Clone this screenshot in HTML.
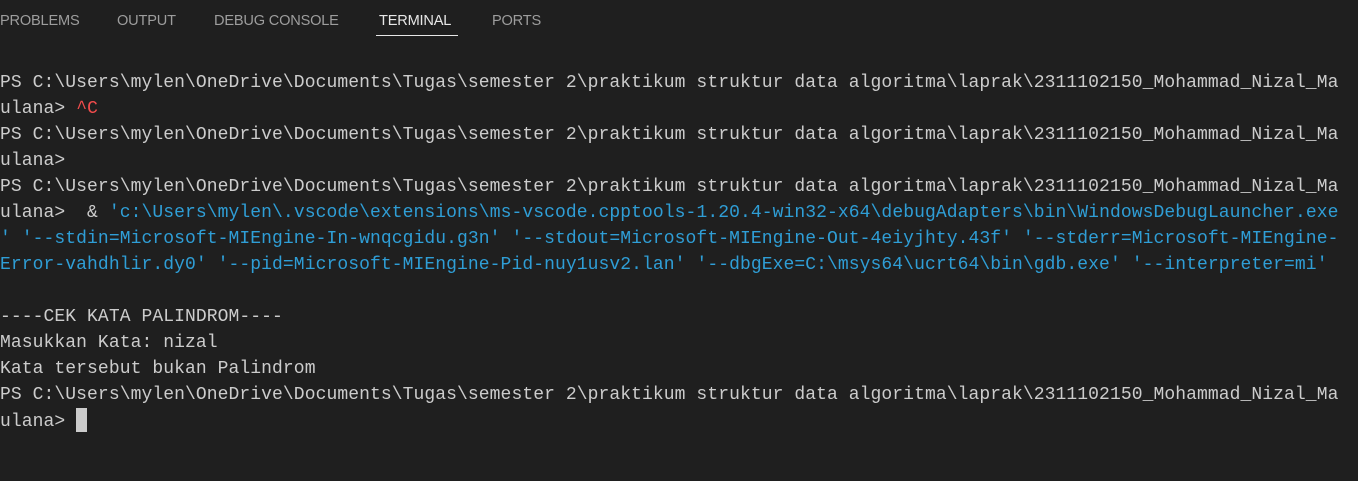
<!DOCTYPE html>
<html><head><style>
body{margin:0;width:1358px;height:481px;background:#1f1f1f;overflow:hidden;position:relative;font-family:"Liberation Sans",sans-serif}
.tab{position:absolute;top:13px;font-size:14.6px;color:#9d9d9d;letter-spacing:-0.2px}
.act{color:#e7e7e7}
.ul{position:absolute;left:376px;top:35px;width:82px;height:1px;background:#e7e7e7}
.term{position:absolute;left:0;top:70px;font-family:"Liberation Mono",monospace;font-size:18px;letter-spacing:0.08px;line-height:26px;color:#cccccc;white-space:pre}
.b{color:#2f9ed6}.r{color:#f14c4c}
.cur{display:inline-block;width:11px;height:24px;background:#cccccc;vertical-align:-6px}
</style></head><body>
<div class="tab" style="left:0">PROBLEMS</div>
<div class="tab" style="left:117px">OUTPUT</div>
<div class="tab" style="left:214px">DEBUG CONSOLE</div>
<div class="tab act" style="left:379px">TERMINAL</div>
<div class="tab" style="left:492px">PORTS</div>
<div class="ul"></div>
<div class="term">PS C:\Users\mylen\OneDrive\Documents\Tugas\semester 2\praktikum struktur data algoritma\laprak\2311102150_Mohammad_Nizal_Ma
ulana&gt; <span class="r">^C</span>
PS C:\Users\mylen\OneDrive\Documents\Tugas\semester 2\praktikum struktur data algoritma\laprak\2311102150_Mohammad_Nizal_Ma
ulana&gt;
PS C:\Users\mylen\OneDrive\Documents\Tugas\semester 2\praktikum struktur data algoritma\laprak\2311102150_Mohammad_Nizal_Ma
ulana&gt;  &amp; <span class="b">'c:\Users\mylen\.vscode\extensions\ms-vscode.cpptools-1.20.4-win32-x64\debugAdapters\bin\WindowsDebugLauncher.exe
' '--stdin=Microsoft-MIEngine-In-wnqcgidu.g3n' '--stdout=Microsoft-MIEngine-Out-4eiyjhty.43f' '--stderr=Microsoft-MIEngine-
Error-vahdhlir.dy0' '--pid=Microsoft-MIEngine-Pid-nuy1usv2.lan' '--dbgExe=C:\msys64\ucrt64\bin\gdb.exe' '--interpreter=mi'</span>

----CEK KATA PALINDROM----
Masukkan Kata: nizal
Kata tersebut bukan Palindrom
PS C:\Users\mylen\OneDrive\Documents\Tugas\semester 2\praktikum struktur data algoritma\laprak\2311102150_Mohammad_Nizal_Ma
ulana&gt; <span class="cur"></span></div>
</body></html>
